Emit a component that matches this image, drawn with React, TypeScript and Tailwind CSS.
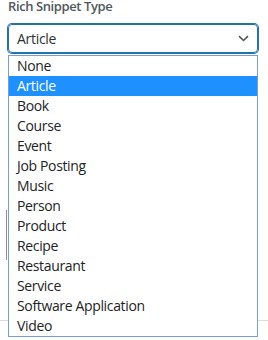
import React from "react";

const options = [
  "None",
  "Article",
  "Book",
  "Course",
  "Event",
  "Job Posting",
  "Music",
  "Person",
  "Product",
  "Recipe",
  "Restaurant",
  "Service",
  "Software Application",
  "Video",
];

export default function App() {
  return (
    <div
      className="relative w-[268px] h-[340px] overflow-hidden bg-white"
      style={{ fontFamily: '"Open Sans", "Noto Sans", sans-serif' }}
    >
      <div className="absolute left-0 right-0 top-[320px] h-px bg-[#dcdcde]" />
      <div className="absolute left-[6px] top-[210px] h-[50px] w-px bg-[#8c8f94]" />
      <div className="px-[8px]">
        <div className="mt-[-4px] h-[28px] text-[13px] font-semibold leading-[20px] tracking-[-0.4px] text-[#50575e]">
          Rich Snippet Type
        </div>
        <div className="flex h-[29px] w-[250px] items-center justify-between rounded-[4px] border border-[#2271b1] pl-[8px] pr-[8px] shadow-[0_0_0_1px_#2271b1] text-[14px] tracking-[-0.3px] text-[#2c3338]">
          <span>Article</span>
          <svg width="11" height="7" viewBox="0 0 11 7" fill="none">
            <path d="M1 1.2l4.5 4.3 4.5-4.3" stroke="#50575e" strokeWidth="1.6" />
          </svg>
        </div>
      </div>
      <div className="absolute left-[8px] top-[55px] w-[250px] border border-[#7a9cd8] bg-white">
        {options.map((o) => (
          <div
            key={o}
            className={`h-[20px] pl-[8px] text-[14px] leading-[20px] tracking-[-0.35px] ${
              o === "Article" ? "bg-[#1e90ff] text-white" : "text-[#1d2327]"
            }`}
          >
            {o}
          </div>
        ))}
      </div>
    </div>
  );
}
